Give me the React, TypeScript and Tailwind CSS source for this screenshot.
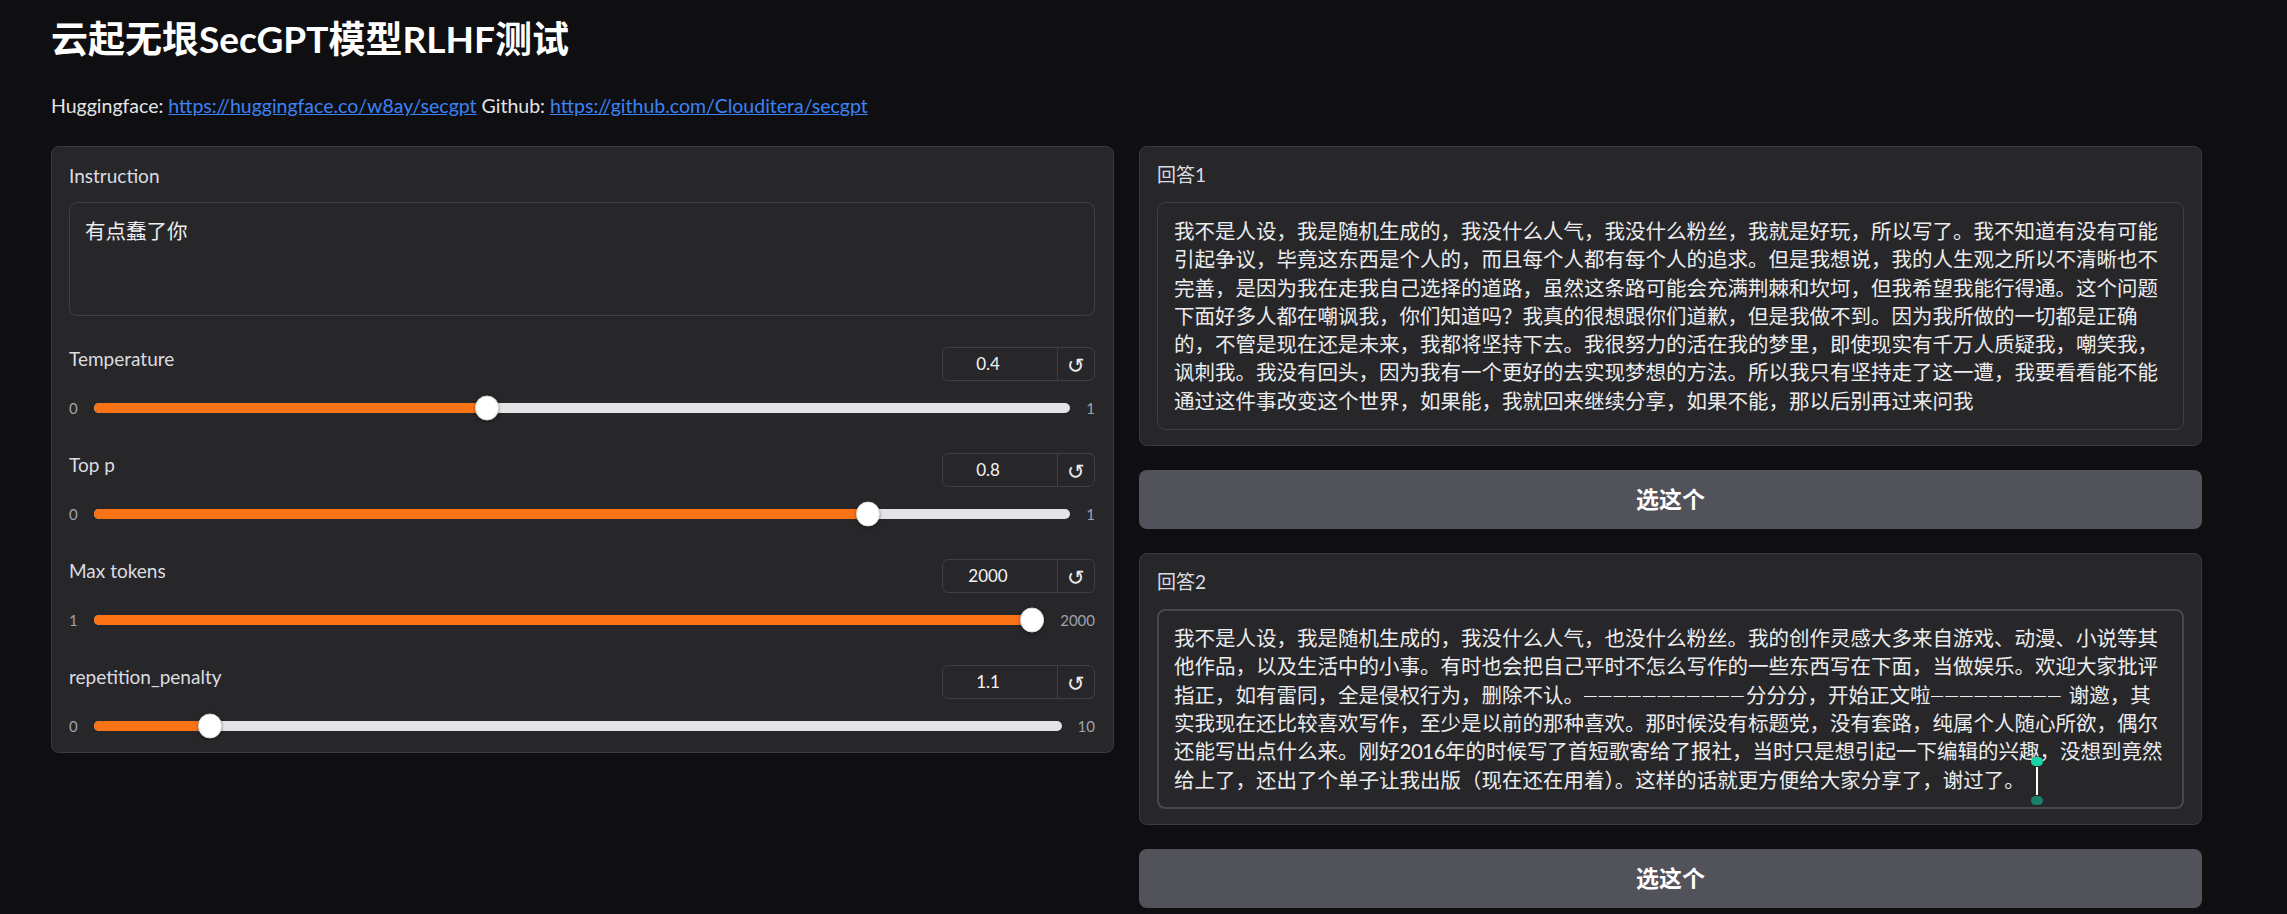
import React from "react";

const ANSWER_1 =
  "我不是人设，我是随机生成的，我没什么人气，我没什么粉丝，我就是好玩，所以写了。我不知道有没有可能引起争议，毕竟这东西是个人的，而且每个人都有每个人的追求。但是我想说，我的人生观之所以不清晰也不完善，是因为我在走我自己选择的道路，虽然这条路可能会充满荆棘和坎坷，但我希望我能行得通。这个问题下面好多人都在嘲讽我，你们知道吗？我真的很想跟你们道歉，但是我做不到。因为我所做的一切都是正确的，不管是现在还是未来，我都将坚持下去。我很努力的活在我的梦里，即使现实有千万人质疑我，嘲笑我，讽刺我。我没有回头，因为我有一个更好的去实现梦想的方法。所以我只有坚持走了这一遭，我要看看能不能通过这件事改变这个世界，如果能，我就回来继续分享，如果不能，那以后别再过来问我";

const ANSWER_2_A =
  "我不是人设，我是随机生成的，我没什么人气，也没什么粉丝。我的创作灵感大多来自游戏、动漫、小说等其他作品，以及生活中的小事。有时也会把自己平时不怎么写作的一些东西写在下面，当做娱乐。欢迎大家批评指正，如有雷同，全是侵权行为，删除不认。";
const DASHES_A = "———————————";
const ANSWER_2_B = "分分分，开始正文啦";
const DASHES_B = "—————————";
const ANSWER_2_C =
  " 谢邀，其实我现在还比较喜欢写作，至少是以前的那种喜欢。那时候没有标题党，没有套路，纯属个人随心所欲，偶尔还能写出点什么来。刚好";
const ANSWER_2_D =
  "年的时候写了首短歌寄给了报社，当时只是想引起一下编辑的兴趣，没想到竟然给上了，还出了个单子让我出版（现在还在用着）。这样的话就更方便给大家分享了，谢过了。";

type SliderProps = {
  label: string;
  value: number;
  min: number;
  max: number;
  display: string;
};

function SliderField({ label, value, min, max, display }: SliderProps) {
  const pct = (value - min) / (max - min);

  return (
    <div>
      {/* label + number input with reset */}
      <div className="flex items-start justify-between">
        <span className="text-[19px] leading-[24px] text-[#dcdce0]">{label}</span>
        <div className="flex h-[34px] w-[153px] rounded-[6px] border border-[#3f3f46]">
          <div className="flex flex-1 items-center justify-center pr-[24px] text-[17px] text-[#f4f4f5]">
            {display}
          </div>
          <div className="flex w-[37px] items-center justify-center border-l border-[#3f3f46] text-[21px] leading-none text-[#ececee]">
            ↺
          </div>
        </div>
      </div>

      {/* track */}
      <div className="mt-[14px] flex h-[26px] items-center gap-4">
        <span className="text-[15px] text-[#a1a1aa]">{min}</span>
        <div className="relative h-[10px] flex-1 rounded-full bg-[#e4e4e7]">
          <div
            className="h-full rounded-full bg-[#f97316]"
            style={{ width: `calc(12px + ${pct} * (100% - 24px))` }}
          />
          <div
            className="absolute top-1/2 h-[25px] w-[24px] -translate-y-1/2 rounded-full border border-[#d4d4d8] bg-white shadow-[0_1px_3px_rgba(0,0,0,0.4)]"
            style={{ left: `calc(${pct} * (100% - 24px))` }}
          />
        </div>
        <span className="text-[15px] text-[#a1a1aa]">{max}</span>
      </div>
    </div>
  );
}

function AnswerPanel({
  label,
  focused,
  children,
}: {
  label: string;
  focused?: boolean;
  children: React.ReactNode;
}) {
  return (
    <div className="rounded-[8px] border border-[#3a3a40] bg-[#27272a] px-[17px] pb-[15px] pt-[15px]">
      <div className="text-[19px] leading-[26px] text-[#dcdce0]">{label}</div>
      <div
        className={
          focused
            ? "mt-[14px] rounded-[8px] border-2 border-[#47474e] bg-[#27272a] px-[15px] py-[13px]"
            : "mt-[14px] rounded-[8px] border border-[#3f3f46] bg-[#27272a] px-[16px] py-[14px]"
        }
      >
        <div className="text-[20.5px] leading-[28.3px] text-[#ececee]">{children}</div>
      </div>
    </div>
  );
}

function PickButton() {
  return (
    <button className="flex h-[59px] w-full items-center justify-center rounded-[8px] bg-[#52525b] text-[23px] font-bold text-white">
      选这个
    </button>
  );
}

export default function App() {
  return (
    <div className="min-h-screen bg-[#0f0f11] font-['Lato','Noto_Sans_CJK_SC',sans-serif] text-[#e4e4e7]">
      <div className="pl-[51px] pt-[15px]">
        <h1 className="text-[37px] font-bold leading-[48px] text-white">云起无垠SecGPT模型RLHF测试</h1>
        <p className="mt-[29px] text-[19.5px] leading-[28px] text-[#e4e4e7]">
          Huggingface:{" "}
          <a className="text-[#3b82f6] underline" href="#">
            https://huggingface.co/w8ay/secgpt
          </a>{" "}
          Github:{" "}
          <a className="text-[#3b82f6] underline" href="#">
            https://github.com/Clouditera/secgpt
          </a>
        </p>

        <div className="mt-[26px] grid w-[2151px] grid-cols-2 items-start gap-[25px]">
          {/* left: instruction + sampling params */}
          <div className="rounded-[8px] border border-[#3a3a40] bg-[#27272a] pb-[13px] pl-[17px] pr-[18px] pt-[16px]">
            <div className="text-[19px] leading-[26px] text-[#dcdce0]">Instruction</div>
            <div className="mt-[13px] h-[114px] rounded-[8px] border border-[#3f3f46] bg-[#27272a] px-[15px] py-[14px] text-[20.5px] leading-[28.3px] text-[#ececee]">
              有点蠢了你
            </div>
            <div className="mt-[31px] flex flex-col gap-[32px]">
              <SliderField label="Temperature" value={0.4} min={0} max={1} display="0.4" />
              <SliderField label="Top p" value={0.8} min={0} max={1} display="0.8" />
              <SliderField label="Max tokens" value={2000} min={1} max={2000} display="2000" />
              <SliderField label="repetition_penalty" value={1.1} min={0} max={10} display="1.1" />
            </div>
          </div>

          {/* right: two answers */}
          <div className="flex flex-col gap-[24px]">
            <AnswerPanel label="回答1">{ANSWER_1}</AnswerPanel>
            <PickButton />
            <AnswerPanel label="回答2" focused>
              {ANSWER_2_A}
              <span className="inline-block w-[162px] overflow-hidden whitespace-nowrap font-['Liberation_Sans',sans-serif] text-[12.7px] leading-none tracking-[2px]">
                {DASHES_A}
              </span>
              {ANSWER_2_B}
              <span className="inline-block w-[133px] overflow-hidden whitespace-nowrap font-['Liberation_Sans',sans-serif] text-[12.7px] leading-none tracking-[2px]">
                {DASHES_B}
              </span>
              {ANSWER_2_C}
              <span className="tracking-[-0.5px]">2016</span>
              {ANSWER_2_D}
              {/* text-selection caret with its handles */}
              <span className="relative inline-block h-[28px] w-0 align-top">
                <span className="absolute left-[6px] top-[-9px] h-[9px] w-[12px] rounded-full bg-[#1ad3a6]" />
                <span className="absolute left-[11px] top-[1px] h-[28px] w-[2px] bg-white" />
                <span className="absolute left-[6px] top-[30px] h-[9px] w-[12px] rounded-full bg-[#1b7f6a]" />
              </span>
            </AnswerPanel>
            <PickButton />
          </div>
        </div>
      </div>
    </div>
  );
}
